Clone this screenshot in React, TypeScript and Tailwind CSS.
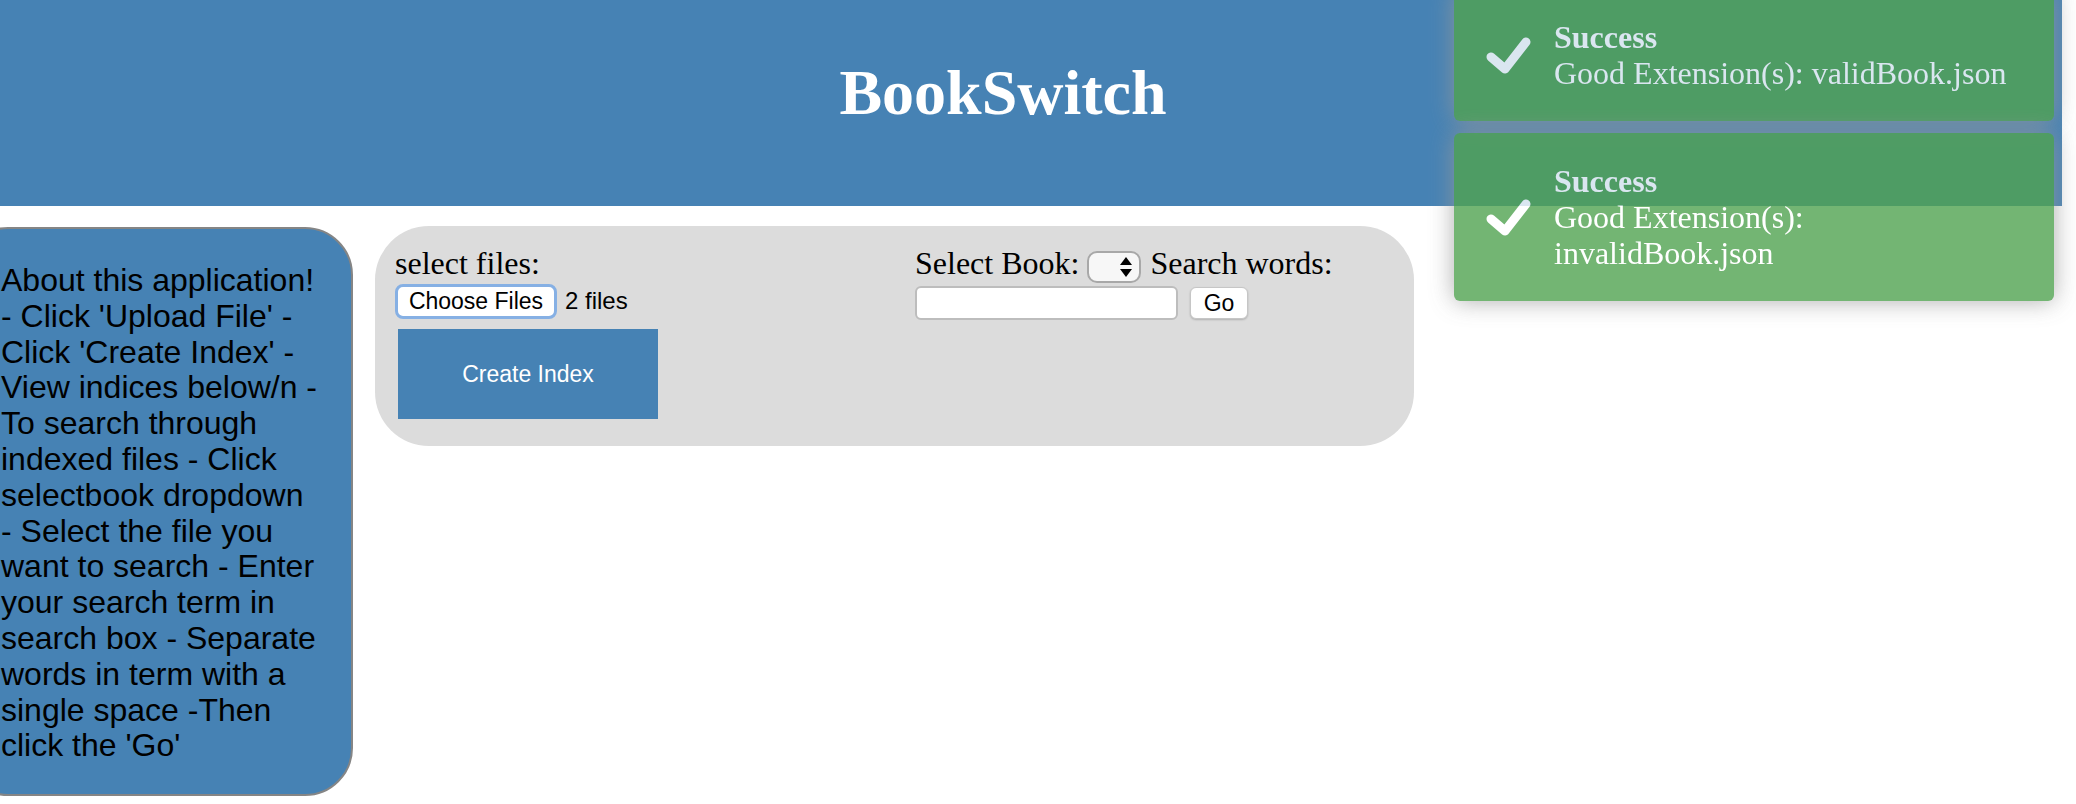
import React from 'react';

const SERIF = 'font-["Liberation_Serif",serif]';
const SANS = 'font-["Liberation_Sans",Arial,sans-serif]';

const TOASTS = [
    { title: 'Success', message: 'Good Extension(s): validBook.json' },
    { title: 'Success', message: 'Good Extension(s): invalidBook.json' },
];

const ABOUT =
    "About this application! - Click 'Upload File' - Click 'Create Index' - View indices below/n - To search through indexed files - Click selectbook dropdown - Select the file you want to search - Enter your search term in search box - Separate words in term with a single space -Then click the 'Go'";

const CheckIcon: React.FC = () => (
    <svg width="48" height="48" viewBox="0 0 48 48" className="blur-[0.6px]">
        <polyline
            points="7,26 21,38 42,11"
            fill="none"
            stroke="white"
            strokeWidth="9"
            strokeLinecap="round"
            strokeLinejoin="round"
        />
    </svg>
);

const Toast: React.FC<{ title: string; message: string }> = ({ title, message }) => (
    <div className="relative bg-[#51a351] opacity-80 rounded-[6px] shadow-[0_0_24px_#999] pl-[100px] pr-[30px] py-[30px] text-white text-[32px] leading-[36px]">
        <div className="absolute left-[30px] top-0 bottom-0 flex items-center">
            <CheckIcon />
        </div>
        <div className="font-bold">{title}</div>
        <div>{message}</div>
    </div>
);

export default function App() {
    return (
        <div className={`relative w-[2076px] h-[804px] overflow-hidden bg-white text-black ${SERIF}`}>
            <header className="w-[2062px] h-[206px] bg-[#4682b4] flex justify-center pr-[56px] pt-[56px]">
                <h1 className="text-[64px] leading-[74px] font-bold text-white">BookSwitch</h1>
            </header>

            <div className="flex items-start mt-[20px]">
                <aside
                    className={`mt-[1px] -ml-[40px] w-[393px] shrink-0 bg-[#4682b4] border-2 border-[#858585] rounded-[48px] pl-[39px] pr-[30px] pt-[34px] pb-[30px] text-[32px] leading-[35.8px] ${SANS}`}
                >
                    {ABOUT}
                </aside>

                <main className="ml-[22px] w-[1039px] h-[220px] bg-[#dcdcdc] rounded-[54px] pl-[20px] flex">
                    <div className="w-[520px] shrink-0 pt-[19px]">
                        <div className="text-[32px] leading-[37px]">select files:</div>
                        <div className={`flex items-center mt-[1px] ${SANS}`}>
                            <button className="w-[162px] h-[35px] bg-white rounded-[8px] border-[3px] border-[#86b0e4] text-[23px] leading-none text-black">
                                Choose Files
                            </button>
                            <span className="ml-[8px] text-[24px]">2 files</span>
                        </div>
                        <button
                            className={`mt-[10px] ml-[3px] w-[260px] h-[90px] bg-[#4682b4] text-white text-[23px] ${SANS}`}
                        >
                            Create Index
                        </button>
                    </div>

                    <div className="pt-[19px]">
                        <div className="flex items-start h-[37px] text-[32px] leading-[37px]">
                            <span>Select Book:</span>
                            <div className="ml-[8px] mt-[6px] w-[54px] h-[32px] bg-[#f7f7f7] border-2 border-[#a8a8a8] rounded-[10px] flex items-center justify-end pr-[6px]">
                                <svg width="14" height="22" viewBox="0 0 14 22">
                                    <polygon points="7,1 13,9 1,9" fill="black" />
                                    <polygon points="1,13 13,13 7,21" fill="black" />
                                </svg>
                            </div>
                            <span className="ml-[9px]">Search words:</span>
                        </div>
                        <div className={`flex items-center mt-[4px] ${SANS}`}>
                            <div className="w-[263px] h-[34px] bg-white border-2 border-[#bdbdbd] rounded-[6px]" />
                            <button className="ml-[12px] w-[58px] h-[32px] bg-white border border-[#c6c6c6] rounded-[6px] shadow-[0_1px_2px_rgba(0,0,0,0.2)] text-[23px] leading-none">
                                Go
                            </button>
                        </div>
                    </div>
                </main>
            </div>

            <div className="absolute right-[22px] top-[-11px] w-[600px] flex flex-col gap-[12px]">
                {TOASTS.map((t, i) => (
                    <Toast key={i} title={t.title} message={t.message} />
                ))}
            </div>
        </div>
    );
}
